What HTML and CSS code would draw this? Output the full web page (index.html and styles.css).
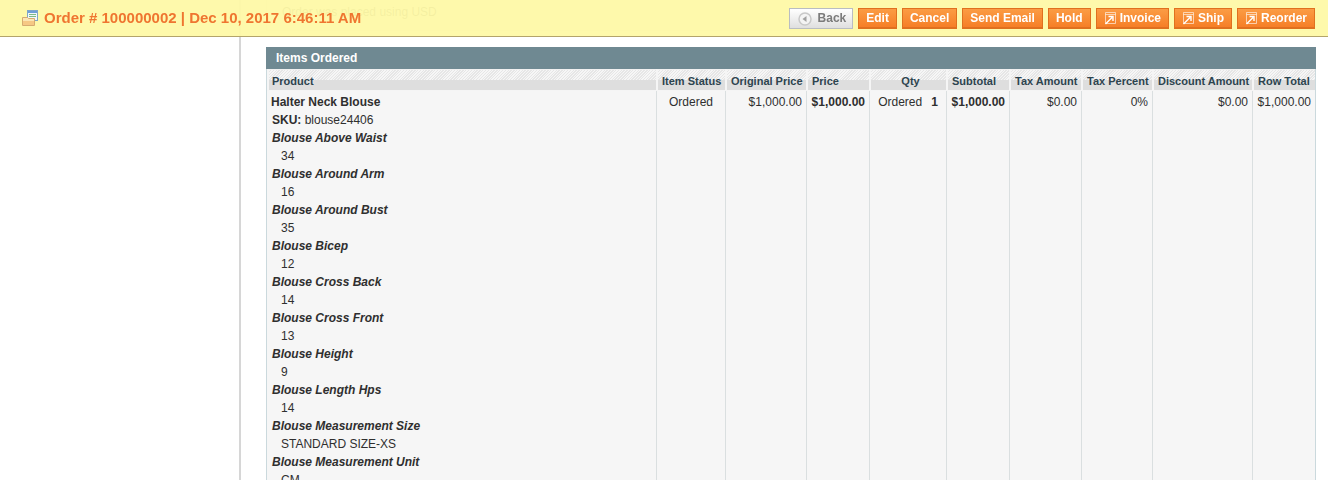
FILE: index.html
```html
<!DOCTYPE html>
<html lang="en">
<head>
<meta charset="utf-8">
<title>Order # 100000002</title>
<link rel="stylesheet" href="styles.css">
</head>
<body>
<header class="floating">
  <h3 class="title">
    <svg class="title-icon" width="16" height="16" viewBox="0 0 16 16"><rect x="5.500" y=".5" width="10" height="10" fill="#f1f6fb" stroke="#7fa6c9"/><rect x="6" y="1" width="9" height="2" fill="#6f9fd6"/><path d="M7 4.500h7M7 6.500h7M7 8.500h5" stroke="#7dbb84"/><path d="M.5 7.500h5l1 1h6v7h-12z" fill="#fbe6b4" stroke="#d6ab70"/><rect x="1" y="11" width="11" height="4" fill="#f6c884"/></svg>
    <span>Order # 100000002 | Dec 10, 2017 6:46:11 AM</span>
  </h3>
  <div class="actions">
    <button class="btn back"><svg width="16" height="16" viewBox="0 0 16 16"><circle cx="8" cy="8" r="6" fill="#f4f4f4" stroke="#c8c8c8" stroke-width="1.500"/><path d="M9.500 5v6l-4-3z" fill="#a0a0a0"/></svg>Back</button>
    <button class="btn">Edit</button>
    <button class="btn">Cancel</button>
    <button class="btn">Send Email</button>
    <button class="btn">Hold</button>
    <button class="btn"><svg class="go" width="13" height="13" viewBox="0 0 13 13"><path d="M1.500.5h10v11h-10z M1.500 2.500h10" fill="none" stroke="#fff" opacity=".6"/><path d="M1.500 12l6.500-6.500M4.500 4.500h4.500v4.500" fill="none" stroke="#fff" stroke-width="1.400"/></svg>Invoice</button>
    <button class="btn"><svg class="go" width="13" height="13" viewBox="0 0 13 13"><path d="M1.500.5h10v11h-10z M1.500 2.500h10" fill="none" stroke="#fff" opacity=".6"/><path d="M1.500 12l6.500-6.500M4.500 4.500h4.500v4.500" fill="none" stroke="#fff" stroke-width="1.400"/></svg>Ship</button>
    <button class="btn"><svg class="go" width="13" height="13" viewBox="0 0 13 13"><path d="M1.500.5h10v11h-10z M1.500 2.500h10" fill="none" stroke="#fff" opacity=".6"/><path d="M1.500 12l6.500-6.500M4.500 4.500h4.500v4.500" fill="none" stroke="#fff" stroke-width="1.400"/></svg>Reorder</button>
  </div>
</header>
<div class="page">
  <aside class="side"></aside>
  <main class="main">
    <div class="notice">Order was placed using USD</div>
    <h4 class="section">Items Ordered</h4>
    <table class="grid">
      <colgroup>
        <col class="c1"><col class="c2"><col class="c3"><col class="c4"><col class="c5"><col class="c6"><col class="c7"><col class="c8"><col class="c9"><col class="c10">
      </colgroup>
      <thead>
        <tr>
          <th class="l">Product</th><th class="l">Item Status</th><th class="l">Original Price</th><th class="l">Price</th><th>Qty</th><th class="l">Subtotal</th><th class="l">Tax Amount</th><th class="l">Tax Percent</th><th class="l">Discount Amount</th><th class="l">Row Total</th>
        </tr>
      </thead>
      <tbody>
        <tr>
          <td>
            <div class="name">Halter Neck Blouse</div>
            <div class="opt"><strong>SKU:</strong> blouse24406</div>
            <dl class="opts">
              <dt>Blouse Above Waist</dt><dd>34</dd>
              <dt>Blouse Around Arm</dt><dd>16</dd>
              <dt>Blouse Around Bust</dt><dd>35</dd>
              <dt>Blouse Bicep</dt><dd>12</dd>
              <dt>Blouse Cross Back</dt><dd>14</dd>
              <dt>Blouse Cross Front</dt><dd>13</dd>
              <dt>Blouse Height</dt><dd>9</dd>
              <dt>Blouse Length Hps</dt><dd>14</dd>
              <dt>Blouse Measurement Size</dt><dd>STANDARD SIZE-XS</dd>
              <dt>Blouse Measurement Unit</dt><dd>CM</dd>
            </dl>
          </td>
          <td class="c">Ordered</td>
          <td class="r">$1,000.00</td>
          <td class="r b">$1,000.00</td>
          <td class="qty"><span>Ordered</span><strong>1</strong></td>
          <td class="r b">$1,000.00</td>
          <td class="r">$0.00</td>
          <td class="r">0%</td>
          <td class="r">$0.00</td>
          <td class="r">$1,000.00</td>
        </tr>
      </tbody>
    </table>
  </main>
</div>
</body>
</html>
```
FILE: styles.css
```css
html, body {
  margin: 0;
  height: 480px;
  overflow: hidden;
  background: #fff;
}
body {
  font: 12px/18px "Liberation Sans", Arial, sans-serif;
  color: #2f2f2f;
}
.floating {
  position: fixed;
  top: 0;
  left: 0;
  right: 0;
  height: 36px;
  display: flex;
  align-items: center;
  justify-content: space-between;
  padding: 0 13px 0 22px;
  background: rgba(254, 249, 166, .95);
  border-bottom: 1px solid #b3a46b;
  z-index: 2;
}
.title {
  margin: 0;
  display: flex;
  align-items: center;
  font-size: 15px;
  font-weight: bold;
  color: #ef7530;
  line-height: 36px;
}
.title-icon {
  margin-right: 6px;
}
.actions {
  display: flex;
  gap: 5px;
  margin-top: 1px;
}
.btn {
  display: flex;
  align-items: center;
  height: 21px;
  padding: 0 7px;
  font: bold 12px/17px "Liberation Sans", Arial, sans-serif;
  color: #fff;
  background: linear-gradient(#fb9c44, #f67f27);
  border: 1px solid #e0701f;
  border-width: 1px 1px 2px 1px;
  cursor: pointer;
}
.btn.back {
  color: #7b7b7b;
  background: linear-gradient(#fff, #dfdfdf);
  border: 1px solid #b9bdc2;
  padding: 0 6px 0 7px;
}
.btn.back svg {
  margin-right: 5px;
}
.go {
  margin-right: 3px;
}
.page {
  display: flex;
  height: 480px;
}
.side {
  flex: 0 0 239px;
  border-right: 2px solid #d6d6d6;
}
.main {
  flex: 1;
  padding: 0 12px 0 25px;
  min-width: 0;
}
.notice {
  height: 31px;
  box-sizing: border-box;
  padding: 3px 15px;
  border: 1px solid #e6e6e6;
  border-top: 0;
  color: #444;
  margin-bottom: 16px;
}
.section {
  margin: 0;
  height: 22px;
  padding-left: 10px;
  background: #6f8992;
  color: #fff;
  font-size: 12px;
  line-height: 22px;
}
.grid {
  width: 1050px;
  table-layout: fixed;
  border-collapse: separate;
  border-spacing: 0;
  background: #f6f6f6;
  border: 1px solid #cbd9dd;
  border-width: 0 1px;
}
.c1 { width: 389px; }
.c2 { width: 69px; }
.c3 { width: 81px; }
.c4 { width: 63px; }
.c5 { width: 77px; }
.c6 { width: 63px; }
.c7 { width: 72px; }
.c8 { width: 71px; }
.c9 { width: 100px; }
.c10 { width: 63px; }
.grid th {
  height: 18px;
  padding: 2px 0 0 4px;
  font-size: 11px;
  line-height: 18px;
  font-weight: bold;
  text-align: center;
  white-space: nowrap;
  color: #2d444f;
  background:
    repeating-linear-gradient(135deg, #f6f6f6 0 1px, #e6e6e6 1px 2px) top / 100% 10px no-repeat,
    #dedede;
  background-clip: padding-box;
  border-top: 1px solid #f0f0f0;
  border-left: 2px solid #f5f5f5;
  border-bottom: 1px solid #f5f5f5;
}
.grid th:first-child {
  padding-left: 3px;
}
.grid th.l {
  text-align: left;
}
.grid td {
  vertical-align: top;
  padding: 2px 4px 0;
  border-left: 1px solid #dadfe0;
  white-space: nowrap;
}
.grid td:first-child {
  border-left: 0;
}
.name {
  font-weight: bold;
}
.opt,
.opts {
  margin: 0 0 0 1px;
}
.opts dt {
  font-weight: bold;
  font-style: italic;
}
.opts dd {
  margin: 0;
  padding-left: 9px;
}
.c { text-align: center; }
.r { text-align: right; }
.b { font-weight: bold; }
.qty {
  text-align: center;
}
.qty strong {
  margin-left: 9px;
}
```
